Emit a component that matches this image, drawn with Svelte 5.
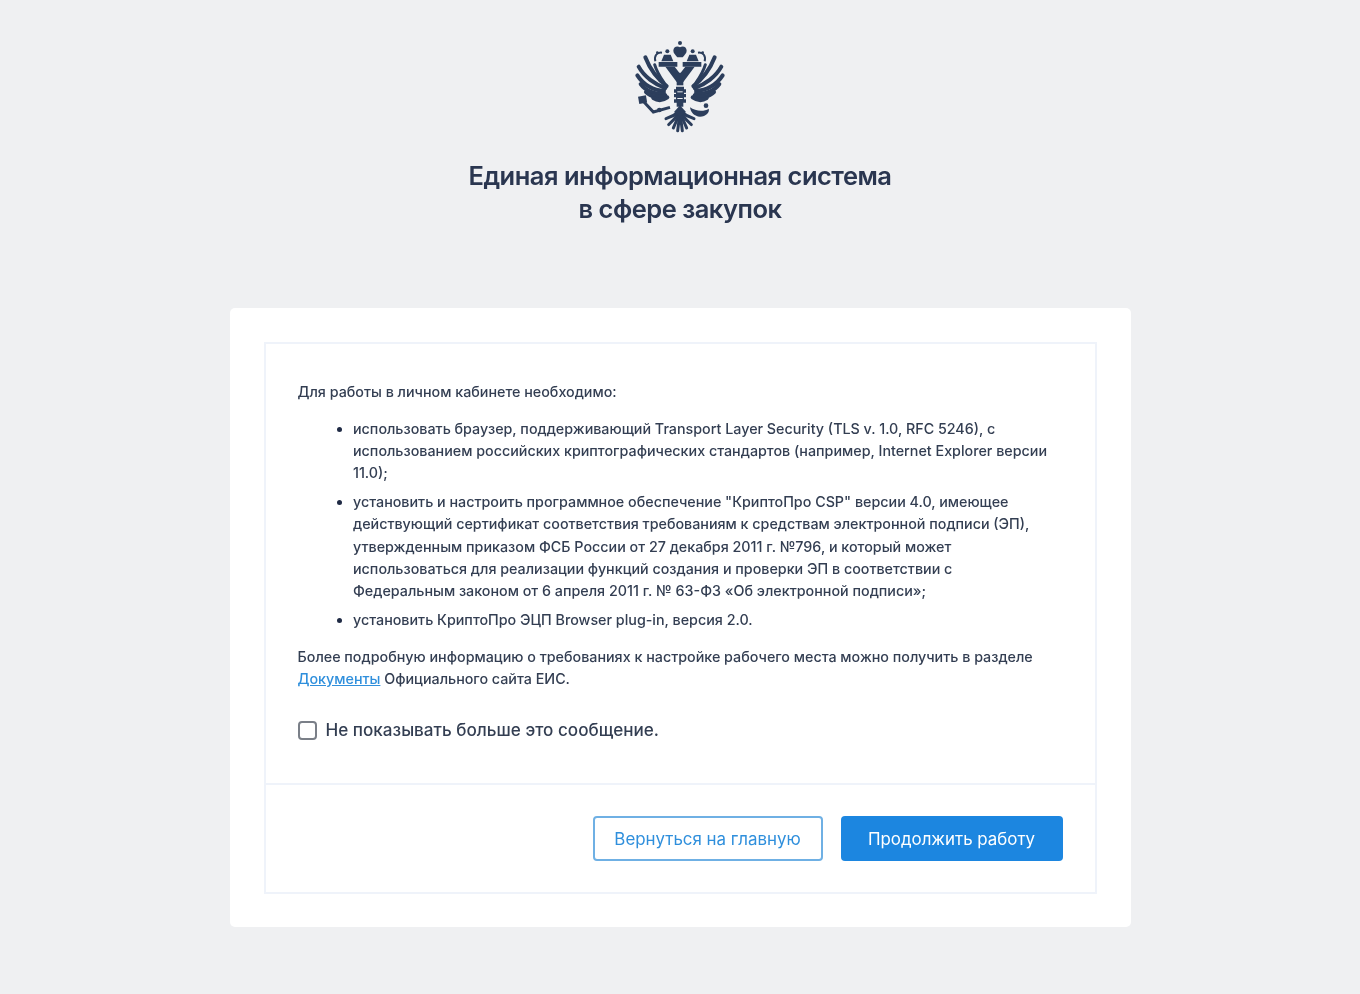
<script>
  const feathers = [
    "M140 168 C116 150 90 118 76 82",
    "M136 174 C106 164 72 140 56 110",
    "M132 182 C100 182 70 164 52 136",
    "M132 190 C106 194 78 184 62 162",
    "M136 196 C116 206 92 200 78 186",
    "M142 202 C128 212 112 212 100 204"
  ];
  const tail = [
    "M176 246 C164 256 150 262 138 266",
    "M176 248 C168 262 156 276 146 284",
    "M177 250 C172 266 166 282 160 294",
    "M178 252 C177 270 175 290 173 302"
  ];
</script>

<main class="page">
  <header class="brand">
    <svg class="emblem" viewBox="0 0 360 330" aria-label="Герб">
      <g fill="#2c3e5c" stroke="#2c3e5c">
        <circle cx="180" cy="39" r="6" stroke="none" />
        <path d="M180 52 C172 46 160 50 160 62 C160 70 168 76 172 82 L188 82 C192 76 200 70 200 62 C200 50 188 46 180 52Z" stroke="none" />
        <g id="half">
          <g fill="none" stroke-width="12" stroke-linecap="round">
            {#each feathers as d}<path {d} />{/each}
            <path d="M132 158 C118 138 108 118 104 104" stroke-width="9" />
          </g>
          <g fill="none" stroke-width="9" stroke-linecap="round">
            {#each tail as d}<path {d} />{/each}
          </g>
          <path d="M116 96 H172 V110 H116Z M132 74 L152 74 L160 94 L124 94Z" stroke="none" />
          <circle cx="142" cy="64" r="6" stroke="none" />
          <path d="M106 94 C102 78 110 66 126 68" fill="none" stroke-width="6" />
          <circle cx="112" cy="68" r="4" stroke="none" />
          <path d="M136 110 L170 156 H180 V128 H178 L164 110Z" stroke="none" />
        </g>
        <use href="#half" transform="translate(360 0) scale(-1 1)" />
        <rect x="170" y="152" width="20" height="14" stroke="none" />
        <path d="M168 170 H192 V178 H198 V188 H192 V192 H198 V202 H192 V208 H198 V218 H190 V230 H170 V218 H162 V208 H168 V202 H162 V192 H168 V188 H162 V178 H168Z" stroke="none" />
        <rect x="172" y="184" width="16" height="3" fill="#eff0f2" stroke="none" />
        <rect x="172" y="204" width="16" height="3" fill="#eff0f2" stroke="none" />
        <path d="M180 226 L198 246 L180 260 L162 246Z" stroke="none" />
        <rect x="56" y="198" width="24" height="22" stroke="none" transform="rotate(-10 67 210)" />
        <path d="M72 216 L100 246 L150 232" fill="none" stroke-width="9" />
        <circle cx="118" cy="240" r="7" stroke="none" />
        <circle cx="258" cy="227" r="7" stroke="none" />
        <path d="M210 232 C226 244 252 246 266 236 C270 246 258 260 240 260 C224 260 212 248 210 232Z" stroke="none" />
      </g>
    </svg>
    <h1>Единая информационная система<br />в сфере закупок</h1>
  </header>

  <section class="card">
    <div class="panel">
      <div class="content">
        <p>Для работы в личном кабинете необходимо:</p>
        <ul>
          <li>использовать браузер, поддерживающий Transport Layer Security (TLS v. 1.0, RFC 5246), с<br />использованием российских криптографических стандартов (например, Internet Explorer версии<br />11.0);</li>
          <li>установить и настроить программное обеспечение "КриптоПро CSP" версии 4.0, имеющее<br />действующий сертификат соответствия требованиям к средствам электронной подписи (ЭП),<br />утвержденным приказом ФСБ России от 27 декабря 2011 г. №796, и который может<br />использоваться для реализации функций создания и проверки ЭП в соответствии с<br />Федеральным законом от 6 апреля 2011 г. № 63-ФЗ «Об электронной подписи»;</li>
          <li>установить КриптоПро ЭЦП Browser plug-in, версия 2.0.</li>
        </ul>
        <p>Более подробную информацию о требованиях к настройке рабочего места можно получить в разделе<br /><a href="#docs">Документы</a> Официального сайта ЕИС.</p>
        <label class="check"><input type="checkbox" /><span>Не показывать больше это сообщение.</span></label>
      </div>
      <div class="actions">
        <button class="secondary">Вернуться на главную</button>
        <button class="primary">Продолжить работу</button>
      </div>
    </div>
  </section>
</main>

<style>
  :global(body) {
    margin: 0;
    background: #eff0f2;
  }
  .page {
    height: 994px;
    box-sizing: border-box;
    padding-top: 30px;
    font-family: Inter, Roboto, sans-serif;
    color: #333e52;
    display: flex;
    flex-direction: column;
    align-items: center;
    overflow: hidden;
  }
  .brand {
    display: flex;
    flex-direction: column;
    align-items: center;
  }
  .emblem {
    display: block;
    width: 120px;
    height: 110px;
    filter: blur(0.5px);
  }
  h1 {
    margin: 19px 0 0;
    font-size: 25.5px;
    line-height: 33px;
    font-weight: 600;
    letter-spacing: -0.5px;
    color: #2a3650;
    text-align: center;
    filter: blur(0.3px);
  }
  .card {
    margin-top: 83px;
    width: 901px;
    height: 619px;
    box-sizing: border-box;
    padding: 34px 34px 33px;
    background: #fff;
    border-radius: 5px;
  }
  .panel {
    height: 100%;
    box-sizing: border-box;
    border: 2px solid #eff3fa;
    display: flex;
    flex-direction: column;
  }
  .content {
    height: 441px;
    box-sizing: border-box;
    padding: 37px 32px 0;
    border-bottom: 2px solid #eff3fa;
    font-size: 14.3px;
    font-weight: 450;
    line-height: 22.1px;
    white-space: nowrap;
    filter: blur(0.3px);
  }
  p {
    margin: 0;
  }
  ul {
    margin: 15px 0;
    padding: 0 0 0 55.5px;
  }
  li + li {
    margin-top: 7px;
  }
  li::marker {
    color: #1f2a44;
  }
  a {
    color: #2f8fdc;
  }
  .check {
    display: flex;
    align-items: center;
    gap: 9px;
    margin-top: 28px;
    font-size: 17.1px;
    line-height: 24px;
  }
  .check input {
    appearance: none;
    flex: none;
    margin: 0;
    width: 19px;
    height: 19px;
    border: 2px solid #7a7f88;
    border-radius: 4px;
    background: #fff;
  }
  .actions {
    flex: 1;
    display: flex;
    justify-content: flex-end;
    align-items: flex-start;
    gap: 18px;
    padding: 31px 32px 0 0;
  }
  button {
    height: 45px;
    box-sizing: border-box;
    border-radius: 4px;
    font: inherit;
    font-size: 16.9px;
    filter: blur(0.3px);
  }
  .secondary {
    width: 230px;
    background: #fff;
    border: 2px solid #6fb0e4;
    color: #2f8fdc;
  }
  .primary {
    width: 222px;
    background: #1c86e0;
    border: 0;
    color: #fff;
  }
</style>
